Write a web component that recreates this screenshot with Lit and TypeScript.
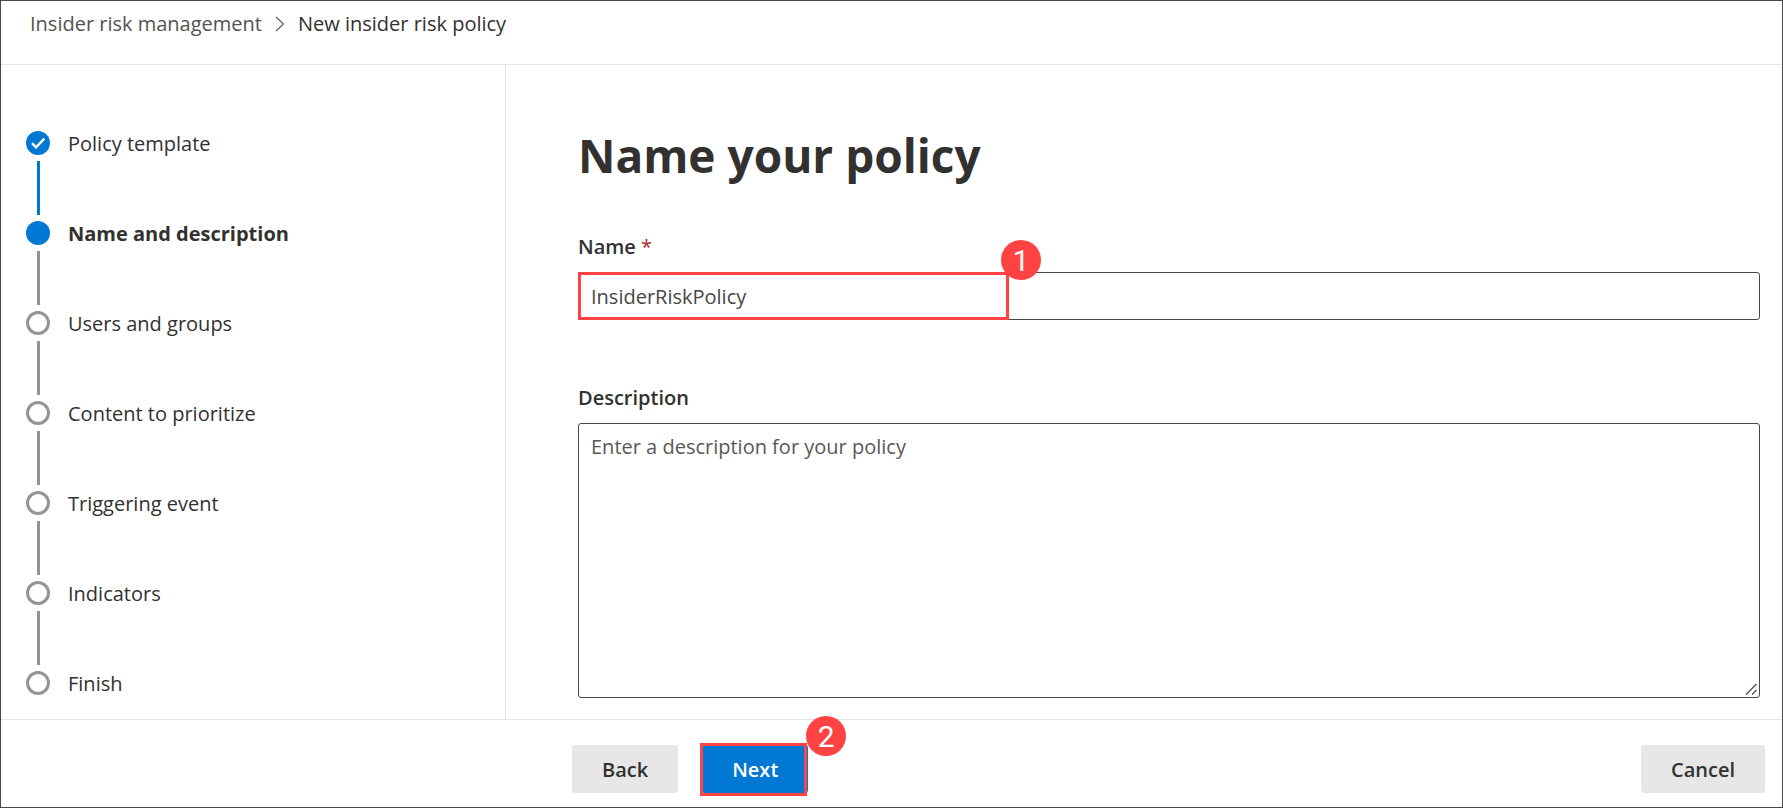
import { LitElement, html, css, nothing } from "lit";
import { customElement, property, state } from "lit/decorators.js";

type StepState = "done" | "current" | "todo";

interface Step {
  label: string;
  state: StepState;
}

@customElement("wizard-step")
class WizardStep extends LitElement {
  @property() label = "";
  @property() state: StepState = "todo";
  @property({ type: Boolean }) last = false;

  static styles = css`
    :host {
      display: grid;
      grid-template-columns: 24px 1fr;
      column-gap: 18px;
      justify-items: start;
    }
    .marker {
      box-sizing: border-box;
      width: 24px;
      height: 24px;
      border: 3px solid #949494;
      border-radius: 50%;
      background: #fff;
    }
    .marker.current,
    .marker.done {
      border: none;
      background: #0078d4;
    }
    .marker svg {
      display: block;
    }
    .label {
      color: #323130;
      line-height: 26px;
      height: 24px;
      white-space: nowrap;
    }
    .label.current {
      font-weight: 700;
    }
    .line {
      justify-self: center;
      width: 3px;
      height: 54px;
      margin: 6px 0;
      background: #949494;
    }
    .line.done {
      background: #0078d4;
    }
  `;

  render() {
    return html`
      <span class="marker ${this.state}">
        ${this.state === "done"
          ? html`<svg width="24" height="24" viewBox="0 0 24 24" aria-hidden="true">
              <path d="M6 12.2l4 4.1 8.3-8.6" fill="none" stroke="#fff" stroke-width="2.4" />
            </svg>`
          : nothing}
      </span>
      <span class="label ${this.state}">${this.label}</span>
      ${this.last ? nothing : html`<span class="line ${this.state}"></span>`}
    `;
  }
}

@customElement("app-root")
class AppRoot extends LitElement {
  @state() private policyName = "InsiderRiskPolicy";

  private steps: Step[] = [
    { label: "Policy template", state: "done" },
    { label: "Name and description", state: "current" },
    { label: "Users and groups", state: "todo" },
    { label: "Content to prioritize", state: "todo" },
    { label: "Triggering event", state: "todo" },
    { label: "Indicators", state: "todo" },
    { label: "Finish", state: "todo" },
  ];

  static styles = css`
    :host {
      --sidebar: 505px;
      --line: #e5e5e5;
      --callout: #ff4343;
      box-sizing: border-box;
      display: grid;
      grid-template-rows: auto 1fr auto;
      min-height: 100vh;
      border: 1px solid #4a4648;
      background: #fff;
      color: #323130;
      font: 20px/28px "Open Sans", "Noto Sans", sans-serif;
    }
    .crumbs {
      display: flex;
      align-items: center;
      gap: 13px;
      padding: 9px 29px 26px;
      border-bottom: 1px solid var(--line);
    }
    .crumbs a {
      color: #55534f;
      text-decoration: none;
    }
    .body {
      display: grid;
      grid-template-columns: var(--sidebar) 1fr;
    }
    .steps {
      box-sizing: border-box;
      margin: 0;
      padding: 66px 25px 20px;
      border-right: 1px solid var(--line);
      list-style: none;
    }
    .form {
      display: flex;
      flex-direction: column;
      padding: 58px 22px 20px 72px;
    }
    h1 {
      margin: 0 0 46px;
      font-size: 46px;
      font-weight: 700;
      line-height: 64px;
    }
    label {
      margin-bottom: 11px;
      font-weight: 600;
    }
    .required {
      color: #a4262c;
      font-weight: 400;
    }
    .field {
      position: relative;
      display: flex;
    }
    .field.name {
      margin-bottom: 64px;
    }
    input,
    textarea {
      box-sizing: border-box;
      width: 100%;
      margin: 0;
      border: 1px solid #484644;
      border-radius: 3px;
      outline: none;
      background: #fff;
      color: #484644;
      font: inherit;
    }
    input {
      height: 48px;
      padding: 1px 12px 0;
    }
    textarea {
      display: block;
      height: 275px;
      padding: 9px 12px;
      resize: vertical;
    }
    textarea::placeholder {
      color: #5a5856;
      opacity: 1;
    }
    .grip {
      position: absolute;
      right: 2px;
      bottom: 2px;
      background: #fff;
      pointer-events: none;
    }
    .footer {
      display: flex;
      gap: 24px;
      padding: 25px 17px 14px calc(var(--sidebar) + 66px);
      border-top: 1px solid var(--line);
    }
    button {
      height: 48px;
      padding: 2px 30px 0;
      border: none;
      border-radius: 3px;
      background: #e7e7e7;
      color: #323130;
      font: inherit;
      font-weight: 600;
    }
    .primary {
      background: #0078d4;
      color: #fff;
    }
    .cancel {
      margin-left: auto;
    }
    .action {
      position: relative;
    }
    .outline {
      position: absolute;
      box-sizing: border-box;
      border: 3px solid var(--callout);
      pointer-events: none;
    }
    .field .outline {
      inset: 0 auto 0 0;
      width: 431px;
    }
    .action .outline {
      inset: -2px 1px -3px -2px;
    }
    .badge {
      position: absolute;
      top: -35px;
      right: -35px;
      width: 40px;
      height: 40px;
      border-radius: 50%;
      background: var(--callout);
      color: #fff;
      font: 30px/42px Roboto, "Liberation Sans", sans-serif;
      text-align: center;
    }
    .action .badge {
      top: -29px;
      right: -38px;
    }
  `;

  private onName(e: Event) {
    this.policyName = (e.target as HTMLInputElement).value;
  }

  render() {
    return html`
      <nav class="crumbs" aria-label="Breadcrumb">
        <a href="#">Insider risk management</a>
        <svg width="10" height="16" viewBox="0 0 10 16" aria-hidden="true">
          <path d="M1 1l7.5 7L1 15" fill="none" stroke="#605e5c" stroke-width="1.2" />
        </svg>
        <span>New insider risk policy</span>
      </nav>
      <div class="body">
        <ol class="steps">
          ${this.steps.map(
            (s, i) => html`<li>
              <wizard-step
                .label=${s.label}
                .state=${s.state}
                .last=${i === this.steps.length - 1}
              ></wizard-step>
            </li>`
          )}
        </ol>
        <main class="form">
          <h1>Name your policy</h1>
          <label for="name">Name <span class="required">*</span></label>
          <div class="field name">
            <input id="name" type="text" .value=${this.policyName} @input=${this.onName} required />
            <span class="outline"><span class="badge">1</span></span>
          </div>
          <label for="description">Description</label>
          <div class="field">
            <textarea id="description" placeholder="Enter a description for your policy"></textarea>
            <svg class="grip" width="13" height="13" viewBox="0 0 13 13" aria-hidden="true">
              <path d="M1 11.5L11.5 1M7 11.5L11.5 7" fill="none" stroke="#555" stroke-width="1.4" />
            </svg>
          </div>
        </main>
      </div>
      <footer class="footer">
        <button type="button">Back</button>
        <div class="action">
          <button type="button" class="primary">Next</button>
          <span class="outline"></span>
          <span class="badge">2</span>
        </div>
        <button type="button" class="cancel">Cancel</button>
      </footer>
    `;
  }
}
